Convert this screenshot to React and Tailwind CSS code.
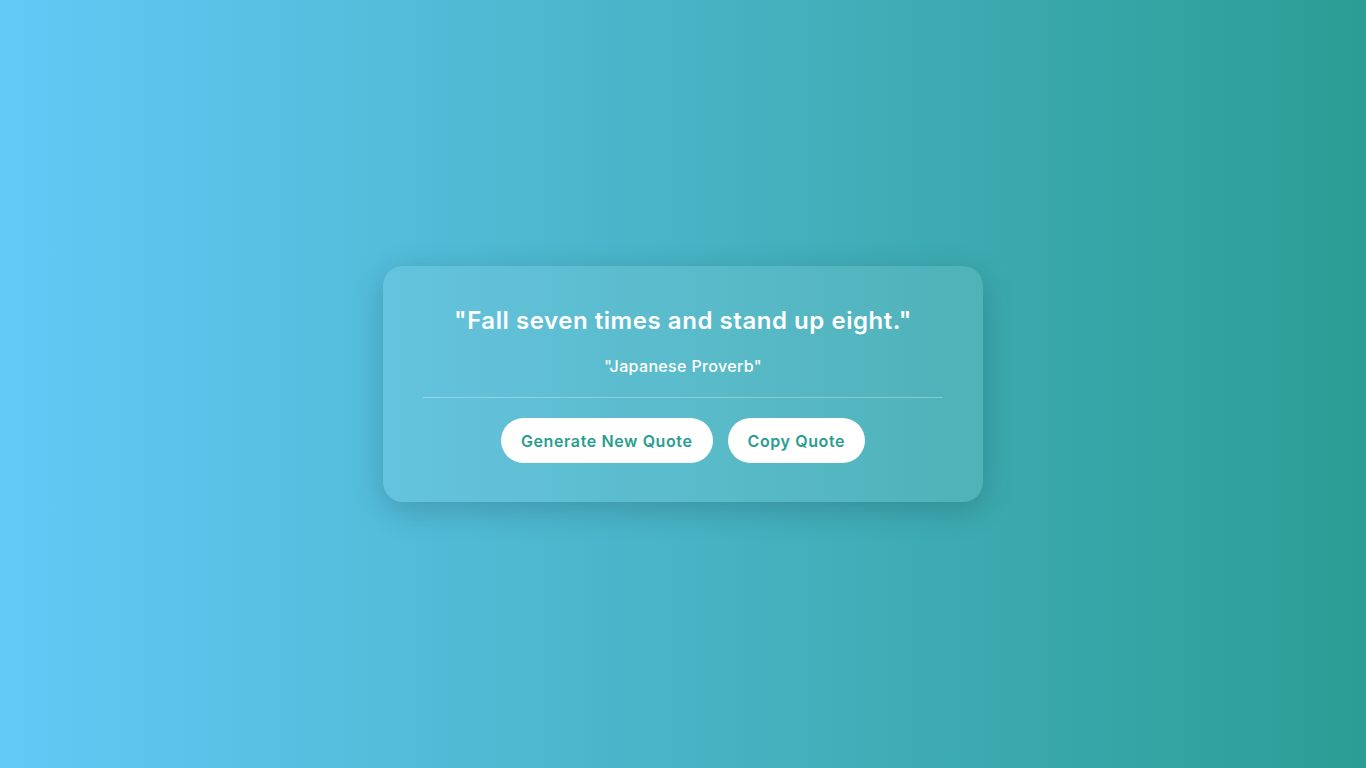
export default function App() {
  const quote = 'Fall seven times and stand up eight.'
  const author = 'Japanese Proverb'

  return (
    <div
      className="flex min-h-screen w-full items-center justify-center bg-gradient-to-r from-[#62c9f7] to-[#2b9d94]"
      style={{ fontFamily: 'Inter, "Open Sans", sans-serif' }}
    >
      <div className="w-[600px] rounded-[20px] bg-white/10 px-10 pt-[39px] pb-[39px] text-center shadow-[0_8px_32px_rgba(0,0,0,0.18)]">
        <h1 className="text-[24px] leading-8 font-semibold tracking-[0.55px] text-white">"{quote}"</h1>
        <p className="mt-[17px] text-[16px] leading-6 font-medium tracking-[0.35px] text-white">"{author}"</p>
        <div className="mt-[19px] border-t border-white/30" />
        <div className="mt-5 flex items-center justify-center gap-[15px]">
          <button className="h-[45px] rounded-full bg-white px-5 text-[16px] font-semibold tracking-[0.6px] text-[#2a9d8f]">
            Generate New Quote
          </button>
          <button className="h-[45px] rounded-full bg-white px-5 text-[16px] font-semibold tracking-[0.6px] text-[#2a9d8f]">
            Copy Quote
          </button>
        </div>
      </div>
    </div>
  )
}
